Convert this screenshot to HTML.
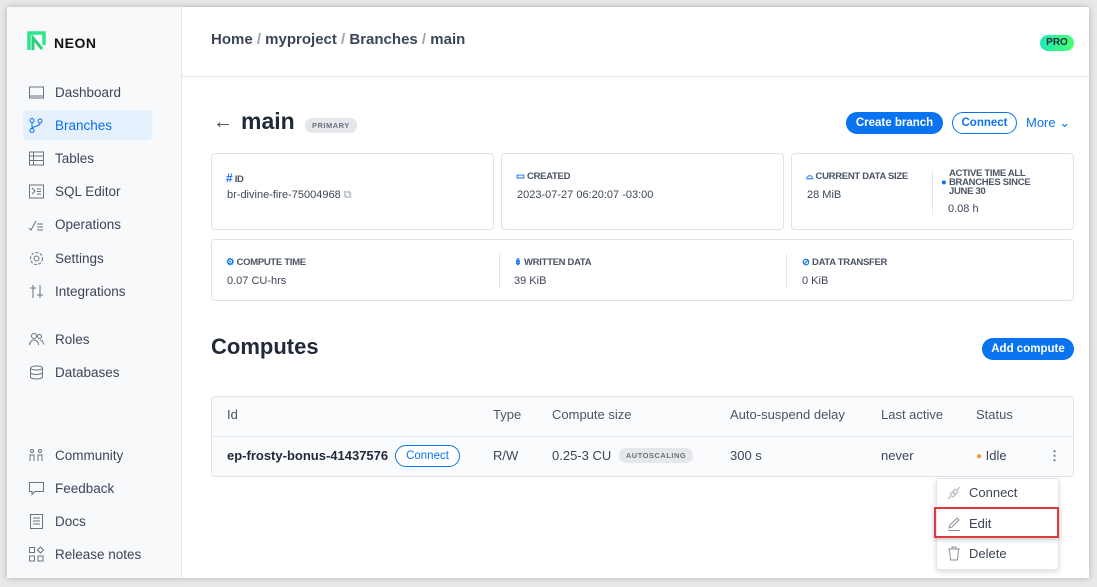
<!DOCTYPE html>
<html><head><meta charset="utf-8"><style>
*{box-sizing:border-box;margin:0;padding:0}
body{width:1097px;height:587px;background:#e9e9ea;font-family:"Liberation Sans",sans-serif;position:relative;overflow:hidden;color:#1f2937}
.frame{position:absolute;left:7px;top:7px;width:1082px;height:571px;background:#fff;box-shadow:0 0 6px rgba(0,0,0,.25);overflow:hidden}
.side{position:absolute;left:0;top:0;width:175px;height:571px;background:#f7f9fb;border-right:1px solid #e4e7eb}
.a{position:absolute}
.nav{position:absolute;left:16px;width:129px;height:30px;display:flex;align-items:center;font-size:13.5px;color:#3c4658;border-radius:4px}
.nav svg{position:absolute;left:5px;width:17px;height:17px}
.nav span{position:absolute;left:32px}
.nav.act{background:#e5f0fd;color:#0a6ff0}
.card{position:absolute;border:1px solid #dfe3e8;border-radius:4px;background:#fff}
.lab{position:absolute;font-size:9.5px;font-weight:bold;color:#4b5565;text-transform:uppercase;letter-spacing:-.3px}
.val{position:absolute;font-size:11px;color:#3c4658}
.btn{position:absolute;height:22px;border-radius:11px;font-size:11.5px;font-weight:bold;text-align:center;line-height:20px}
.th{position:absolute;top:10px;font-size:13px;color:#4b5565}
.td{position:absolute;top:51px;font-size:13px;color:#3c4658}
.pill{background:#e5e7eb;color:#6b7280;font-size:7.5px;font-weight:bold;letter-spacing:.5px;border-radius:7px;padding:3px 7px}
</style></head><body>
<div class="frame">
<div class="side">
 <svg class="a" style="left:20px;top:24px" width="20" height="21" viewBox="0 0 20 21"><path d="M2 19V2h15v12" fill="none" stroke="#2ee58b" stroke-width="3.5"/><path d="M6 19V7l9 11" fill="none" stroke="#2bd07b" stroke-width="3"/></svg>
 <div class="a" style="left:47px;top:28px;font-size:14px;font-weight:bold;color:#111;letter-spacing:.5px">NEON</div>
 <div class="nav" style="top:70px"><svg viewBox="0 0 17 17" fill="none" stroke="#6b7280"><rect x="1.5" y="3" width="14" height="11"/><path d="M1.5 12h14"/></svg><span>Dashboard</span></div>
 <div class="nav act" style="top:103px"><svg viewBox="0 0 17 17" fill="none" stroke="#0a6ff0"><circle cx="4" cy="3.5" r="2"/><circle cx="4" cy="13.5" r="2"/><circle cx="12" cy="4" r="2"/><path d="M4 5.5v6M12 6c0 4-8 3-8 5.5"/></svg><span>Branches</span></div>
 <div class="nav" style="top:136px"><svg viewBox="0 0 17 17" fill="none" stroke="#6b7280"><rect x="1.5" y="2" width="14" height="13"/><path d="M1.5 6h14M1.5 10.5h14M5.5 2v13"/></svg><span>Tables</span></div>
 <div class="nav" style="top:169px"><svg viewBox="0 0 17 17" fill="none" stroke="#6b7280"><rect x="1.5" y="2" width="14" height="13"/><path d="M4 5l3 3-3 3M9 6h4M9 8.5h4M9 11h4"/></svg><span>SQL Editor</span></div>
 <div class="nav" style="top:202px"><svg viewBox="0 0 17 17" fill="none" stroke="#6b7280"><path d="M1 12l2 2 5-9M9 8h6M9 11h6M9 14h6"/></svg><span>Operations</span></div>
 <div class="nav" style="top:236px"><svg viewBox="0 0 17 17" fill="none" stroke="#6b7280"><circle cx="8.5" cy="8.5" r="2.5"/><circle cx="8.5" cy="8.5" r="6" stroke-dasharray="3 1.5"/></svg><span>Settings</span></div>
 <div class="nav" style="top:269px"><svg viewBox="0 0 17 17" fill="none" stroke="#6b7280"><path d="M5 2v13M12 2v13M2 5h6M9 12h6"/></svg><span>Integrations</span></div>
 <div class="nav" style="top:317px"><svg viewBox="0 0 17 17" fill="none" stroke="#6b7280"><circle cx="6" cy="5" r="2.5"/><path d="M1.5 14c0-3 2-5 4.5-5s4.5 2 4.5 5"/><circle cx="11.5" cy="5.5" r="2"/><path d="M12 9c2 0 3.5 2 3.5 4.5"/></svg><span>Roles</span></div>
 <div class="nav" style="top:350px"><svg viewBox="0 0 17 17" fill="none" stroke="#6b7280"><ellipse cx="8.5" cy="4" rx="6" ry="2"/><path d="M2.5 4v9c0 1 2.7 2 6 2s6-1 6-2V4M2.5 8.5c0 1 2.7 2 6 2s6-1 6-2"/></svg><span>Databases</span></div>
 <div class="nav" style="top:433px"><svg viewBox="0 0 17 17" fill="none" stroke="#6b7280"><circle cx="4" cy="4" r="1.5"/><circle cx="12" cy="4" r="1.5"/><path d="M2 14V8h4v6M10 14V8h4v6"/></svg><span>Community</span></div>
 <div class="nav" style="top:466px"><svg viewBox="0 0 17 17" fill="none" stroke="#6b7280"><path d="M1.5 2.5h14v9H7l-3 3v-3H1.5z"/></svg><span>Feedback</span></div>
 <div class="nav" style="top:499px"><svg viewBox="0 0 17 17" fill="none" stroke="#6b7280"><rect x="2.5" y="1.5" width="12" height="14"/><path d="M5 5h7M5 8h7M5 11h7"/></svg><span>Docs</span></div>
 <div class="nav" style="top:532px"><svg viewBox="0 0 17 17" fill="none" stroke="#6b7280"><rect x="1.5" y="1.5" width="5" height="5"/><rect x="1.5" y="10" width="5" height="5"/><rect x="10" y="10" width="5" height="5"/><path d="M12.5 1l3 3-3 3-3-3z"/></svg><span>Release notes</span></div>
</div>
<div class="a" style="left:175px;top:69px;width:907px;height:1px;background:#e4e7eb"></div>
<div class="a" style="left:204px;top:24px;font-size:15px;font-weight:bold;color:#3c4658">Home <span style="color:#9ca3af">/</span> myproject <span style="color:#9ca3af">/</span> Branches <span style="color:#9ca3af">/</span> main</div>
<div class="a" style="left:1033px;top:28px;width:34px;height:16px;border-radius:8px;background:linear-gradient(90deg,#1de9b6,#4cff72);font-size:10px;font-weight:bold;text-align:center;line-height:16px;color:#1f2937">PRO</div>

<div class="a" style="left:206px;top:104px;font-size:20px;color:#3c4658">←</div>
<div class="a" style="left:234px;top:101px;font-size:23px;font-weight:bold;color:#1f2937">main</div>
<div class="a pill" style="left:298px;top:111px">PRIMARY</div>
<div class="btn" style="left:839px;top:105px;width:97px;background:#0a74f0;color:#fff;line-height:22px">Create branch</div>
<div class="btn" style="left:945px;top:105px;width:65px;border:1px solid #0a74f0;color:#0a74f0;background:#fff">Connect</div>
<div class="a" style="left:1019px;top:108px;font-size:13px;color:#0a74f0">More ⌄</div>

<div class="card" style="left:204px;top:146px;width:283px;height:77px">
 <div class="lab" style="left:14px;top:17px"><span style="color:#0a74f0;font-size:12px">#</span> ID</div>
 <div class="val" style="left:15px;top:35px">br-divine-fire-75004968 <span style="color:#9ca3af">⧉</span></div></div>
<div class="card" style="left:494px;top:146px;width:283px;height:77px">
 <div class="lab" style="left:14px;top:17px"><span style="color:#0a74f0">▭</span> CREATED</div>
 <div class="val" style="left:15px;top:35px">2023-07-27 06:20:07 -03:00</div></div>
<div class="card" style="left:784px;top:146px;width:283px;height:77px">
 <div class="lab" style="left:14px;top:17px"><span style="color:#0a74f0">⌓</span> CURRENT DATA SIZE</div>
 <div class="val" style="left:15px;top:35px">28 MiB</div>
 <div class="a" style="left:140px;top:16px;width:1px;height:45px;background:#e4e7eb"></div>
 <div class="lab" style="left:157px;top:15px;line-height:9px;width:100px"><span style="color:#0a74f0;position:absolute;left:-8px;top:9px">●</span>ACTIVE TIME ALL BRANCHES SINCE JUNE 30</div>
 <div class="val" style="left:156px;top:49px">0.08 h</div></div>
<div class="card" style="left:204px;top:232px;width:863px;height:62px">
 <div class="lab" style="left:14px;top:17px"><span style="color:#0a74f0">⚙</span> COMPUTE TIME</div>
 <div class="val" style="left:15px;top:35px">0.07 CU-hrs</div>
 <div class="a" style="left:287px;top:14px;width:1px;height:34px;background:#e4e7eb"></div>
 <div class="lab" style="left:302px;top:17px"><span style="color:#0a74f0">⇟</span> WRITTEN DATA</div>
 <div class="val" style="left:302px;top:35px">39 KiB</div>
 <div class="a" style="left:574px;top:14px;width:1px;height:34px;background:#e4e7eb"></div>
 <div class="lab" style="left:590px;top:17px"><span style="color:#0a74f0">⊘</span> DATA TRANSFER</div>
 <div class="val" style="left:590px;top:35px">0 KiB</div></div>

<div class="a" style="left:204px;top:327px;font-size:22px;font-weight:bold;color:#1f2937">Computes</div>
<div class="btn" style="left:975px;top:331px;width:92px;background:#0a74f0;color:#fff;line-height:22px">Add compute</div>

<div class="card" style="left:204px;top:389px;width:863px;height:81px;background:#fafbfc">
 <div class="a" style="left:0;top:39px;width:861px;height:1px;background:#e4e7eb"></div>
 <div class="th" style="left:15px">Id</div><div class="th" style="left:281px">Type</div><div class="th" style="left:340px">Compute size</div><div class="th" style="left:518px">Auto-suspend delay</div><div class="th" style="left:669px">Last active</div><div class="th" style="left:764px">Status</div>
 <div class="td" style="left:15px;font-weight:bold;color:#1f2937">ep-frosty-bonus-41437576</div>
 <div class="btn" style="left:183px;top:48px;width:65px;border:1px solid #0a74f0;color:#0a74f0;background:#fff;font-weight:normal">Connect</div>
 <div class="td" style="left:281px">R/W</div>
 <div class="td" style="left:340px">0.25-3 CU <span class="pill" style="margin-left:4px;position:relative;top:-2px">AUTOSCALING</span></div>
 <div class="td" style="left:518px">300 s</div><div class="td" style="left:669px">never</div>
 <div class="td" style="left:764px"><span style="color:#f59e3b;font-size:10px;position:relative;top:-1px">●</span> Idle</div>
 <div class="td" style="left:836px;font-weight:bold;color:#6b7280">⋮</div>
</div>

<div class="a" style="left:929px;top:471px;width:123px;height:92px;background:#fff;border:1px solid #e4e7eb;border-radius:3px;box-shadow:0 2px 6px rgba(0,0,0,.15)">
 <div class="a" style="left:32px;top:6px;font-size:13px;color:#3c4658">Connect</div>
 <svg class="a" style="left:10px;top:7px" width="14" height="14" viewBox="0 0 14 14" fill="none" stroke="#b0b6bf"><path d="M1 13l3-3M13 1l-3 3M3 8l3 3 2-2-3-3zM6 5l3 3 2-2-3-3z"/></svg>
 <div class="a" style="left:32px;top:37px;font-size:13px;color:#3c4658">Edit</div>
 <svg class="a" style="left:10px;top:38px" width="14" height="14" viewBox="0 0 14 14" fill="none" stroke="#8a929e"><path d="M2 11l1-3 7-7 2 2-7 7zM1 13.5h12"/></svg>
 <div class="a" style="left:32px;top:67px;font-size:13px;color:#3c4658">Delete</div>
 <svg class="a" style="left:10px;top:67px" width="14" height="15" viewBox="0 0 14 15" fill="none" stroke="#8a929e"><path d="M1 3h12M5 3V1h4v2M2.5 3l1 11h7l1-11"/></svg>
</div>
<div class="a" style="left:927px;top:500px;width:125px;height:31px;border:2px solid #e2393d;box-shadow:0 2px 4px rgba(0,0,0,.2)"></div>
</div>
</body></html>
